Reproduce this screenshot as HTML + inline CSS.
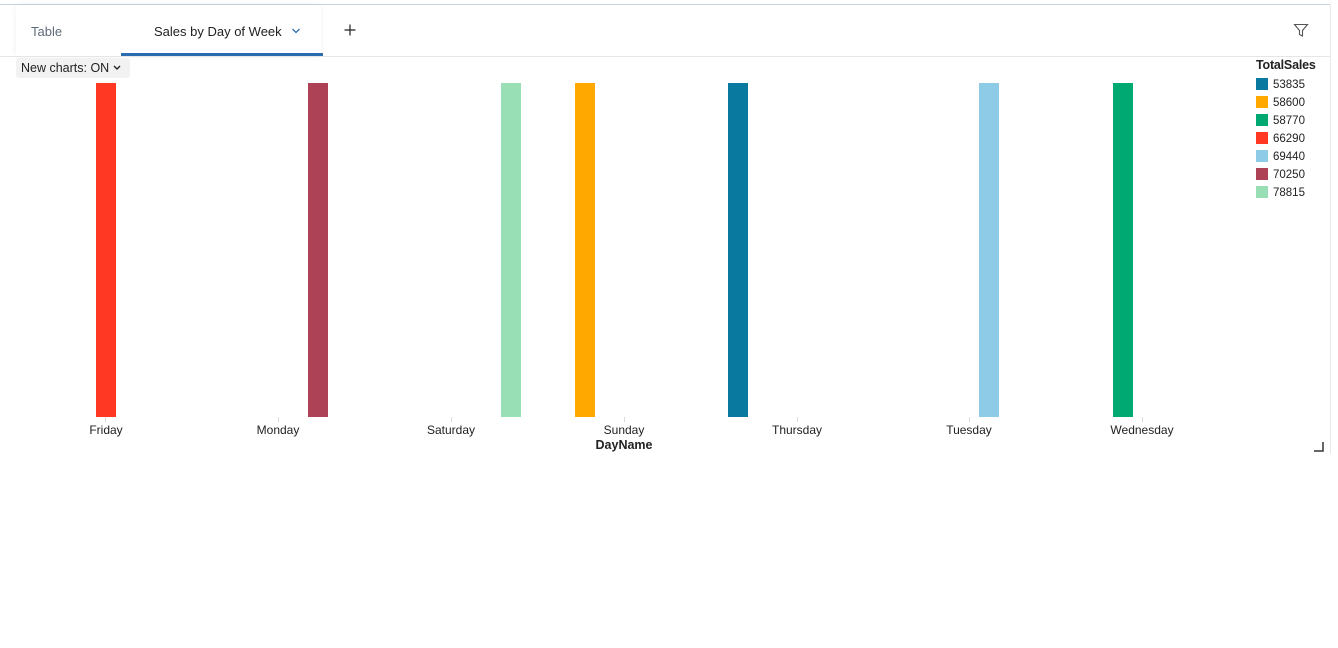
<!DOCTYPE html>
<html><head><style>
body{margin:0;width:1338px;height:648px;background:#fff;font-family:"Liberation Sans",sans-serif;position:relative;overflow:hidden}
.a{position:absolute}
.bar{position:absolute;top:83px;height:334px;width:20px}
.lbl{position:absolute;top:423px;font-size:12px;color:#222;transform:translateX(-50%)}
.tick{position:absolute;top:417px;width:1px;height:5px;background:#ddd}
.lg{position:absolute;left:1256px;font-size:11.5px;color:#222}
.lg i{display:inline-block;width:12px;height:12px;vertical-align:-2px;margin-right:5px}
</style></head><body>
<div class="a" style="left:0;top:4px;width:1330px;height:1px;background:#c9d4dd"></div>
<div class="a" style="left:1330px;top:4px;width:1px;height:450px;background:#e8e8e8"></div>
<div class="a" style="left:16px;top:5px;width:305px;height:51px;background:#fff;box-shadow:0 0 6px rgba(0,0,0,.06)"></div>
<div class="a" style="left:0;top:56px;width:1330px;height:1px;background:#e6e6e6"></div>
<div class="a" style="left:31px;top:24px;font-size:13px;color:#5f6b7a">Table</div>
<div class="a" style="left:154px;top:24px;font-size:13px;color:#222">Sales by Day of Week</div>
<svg class="a" style="left:291px;top:27px" width="10" height="8"><path d="M1.5 2 L5 5.5 L8.5 2" fill="none" stroke="#2e6db4" stroke-width="1.3"/></svg>
<div class="a" style="left:121px;top:53px;width:202px;height:3px;background:#2b6cb0"></div>
<svg class="a" style="left:344px;top:24px" width="12" height="12"><path d="M6 0.5V11.5M0.5 6H11.5" stroke="#222" stroke-width="1.2"/></svg>
<svg class="a" style="left:1293px;top:22px" width="16" height="16"><path d="M1.5 2.5H14.5L9.5 8.5V14L6.5 12.5V8.5Z" fill="none" stroke="#555" stroke-width="1.1"/></svg>
<div class="a" style="left:16px;top:58px;width:114px;height:20px;background:#f2f2f2;border-radius:3px"></div>
<div class="a" style="left:21px;top:61px;font-size:12.5px;color:#222">New charts: ON</div>
<svg class="a" style="left:113px;top:65px" width="8" height="6"><path d="M1 1L4 4L7 1" fill="none" stroke="#222" stroke-width="1.4"/></svg>
<div class="bar" style="left:96px;background:#ff3823"></div>
<div class="bar" style="left:308px;background:#ad4256"></div>
<div class="bar" style="left:501px;background:#98dfb5"></div>
<div class="bar" style="left:575px;background:#ffa800"></div>
<div class="bar" style="left:728px;background:#0a799f"></div>
<div class="bar" style="left:979px;background:#8dcbe6"></div>
<div class="bar" style="left:1113px;background:#00a872"></div>
<div class="tick" style="left:105px"></div><div class="tick" style="left:278px"></div><div class="tick" style="left:451px"></div><div class="tick" style="left:624px"></div><div class="tick" style="left:797px"></div><div class="tick" style="left:969px"></div><div class="tick" style="left:1142px"></div>
<div class="lbl" style="left:106px">Friday</div>
<div class="lbl" style="left:278px">Monday</div>
<div class="lbl" style="left:451px">Saturday</div>
<div class="lbl" style="left:624px">Sunday</div>
<div class="lbl" style="left:797px">Thursday</div>
<div class="lbl" style="left:969px">Tuesday</div>
<div class="lbl" style="left:1142px">Wednesday</div>
<div class="a" style="left:624px;top:438px;font-size:12.5px;font-weight:bold;color:#222;transform:translateX(-50%)">DayName</div>
<div class="lg" style="top:58px;font-weight:bold;font-size:12.5px;letter-spacing:-0.2px">TotalSales</div>
<div class="lg" style="top:78px"><i style="background:#0a799f"></i>53835</div>
<div class="lg" style="top:96px"><i style="background:#ffa800"></i>58600</div>
<div class="lg" style="top:114px"><i style="background:#00a872"></i>58770</div>
<div class="lg" style="top:132px"><i style="background:#ff3823"></i>66290</div>
<div class="lg" style="top:150px"><i style="background:#8dcbe6"></i>69440</div>
<div class="lg" style="top:168px"><i style="background:#ad4256"></i>70250</div>
<div class="lg" style="top:186px"><i style="background:#98dfb5"></i>78815</div>
<svg class="a" style="left:1314px;top:442px" width="10" height="10"><path d="M9 0V9H0" fill="none" stroke="#333" stroke-width="1.5"/></svg>
</body></html>
